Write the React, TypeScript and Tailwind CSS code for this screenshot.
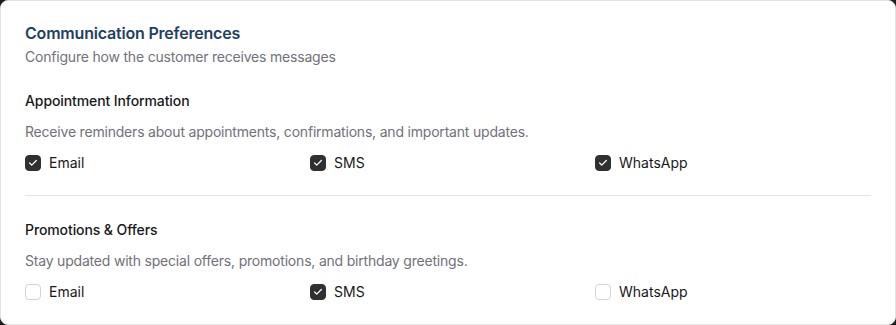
import { useState } from "react";

type Channel = "email" | "sms" | "whatsapp";

const CHANNELS: { key: Channel; label: string }[] = [
  { key: "email", label: "Email" },
  { key: "sms", label: "SMS" },
  { key: "whatsapp", label: "WhatsApp" },
];

function Checkbox({ checked, onChange, label }: { checked: boolean; onChange: () => void; label: string }) {
  return (
    <label className="flex items-center gap-2 cursor-pointer select-none h-5">
      <button
        type="button"
        onClick={onChange}
        className={`flex items-center justify-center w-4 h-4 rounded-[4px] border ${
          checked ? "bg-[#303030] border-[#303030]" : "bg-white border-[#d4d4d8]"
        }`}
      >
        {checked && (
          <svg width="10" height="10" viewBox="0 0 24 24" fill="none" stroke="white" strokeWidth="3" strokeLinecap="round" strokeLinejoin="round">
            <polyline points="20 6 9 17 4 12" />
          </svg>
        )}
      </button>
      <span className="text-sm text-[#18181b]">{label}</span>
    </label>
  );
}

function Section({
  title,
  description,
  value,
  onToggle,
}: {
  title: string;
  description: string;
  value: Record<Channel, boolean>;
  onToggle: (c: Channel) => void;
}) {
  return (
    <div>
      <h3 className="text-sm font-medium leading-5 tracking-[-0.1px] text-[#18181b]">{title}</h3>
      <p className="mt-[11px] text-sm leading-5 tracking-[-0.2px] text-[#71717a]">{description}</p>
      <div className="mt-[11px] grid grid-cols-3 gap-x-[9px]">
        {CHANNELS.map((c) => (
          <Checkbox key={c.key} checked={value[c.key]} onChange={() => onToggle(c.key)} label={c.label} />
        ))}
      </div>
    </div>
  );
}

export default function App() {
  const [appt, setAppt] = useState({ email: true, sms: true, whatsapp: true });
  const [promo, setPromo] = useState({ email: false, sms: true, whatsapp: false });

  return (
    <div className="min-h-screen bg-[#1c1c1c]" style={{ fontFamily: "Inter, 'Noto Sans', sans-serif" }}>
      <div className="h-[325px] w-[896px] rounded-lg border border-[#e4e4e7] bg-white px-6 pt-5">
        <h2 className="text-base font-semibold leading-6 tracking-[-0.2px] text-[#1f3f63]">Communication Preferences</h2>
        <p className="mt-0.5 text-sm leading-5 tracking-[-0.2px] text-[#71717a]">Configure how the customer receives messages</p>

        <div className="mt-6 border-b border-[#e4e4e7] pb-[22px]">
          <Section
            title="Appointment Information"
            description="Receive reminders about appointments, confirmations, and important updates."
            value={appt}
            onToggle={(c) => setAppt((p) => ({ ...p, [c]: !p[c] }))}
          />
        </div>

        <div className="pt-6">
          <Section
            title="Promotions & Offers"
            description="Stay updated with special offers, promotions, and birthday greetings."
            value={promo}
            onToggle={(c) => setPromo((p) => ({ ...p, [c]: !p[c] }))}
          />
        </div>
      </div>
    </div>
  );
}
